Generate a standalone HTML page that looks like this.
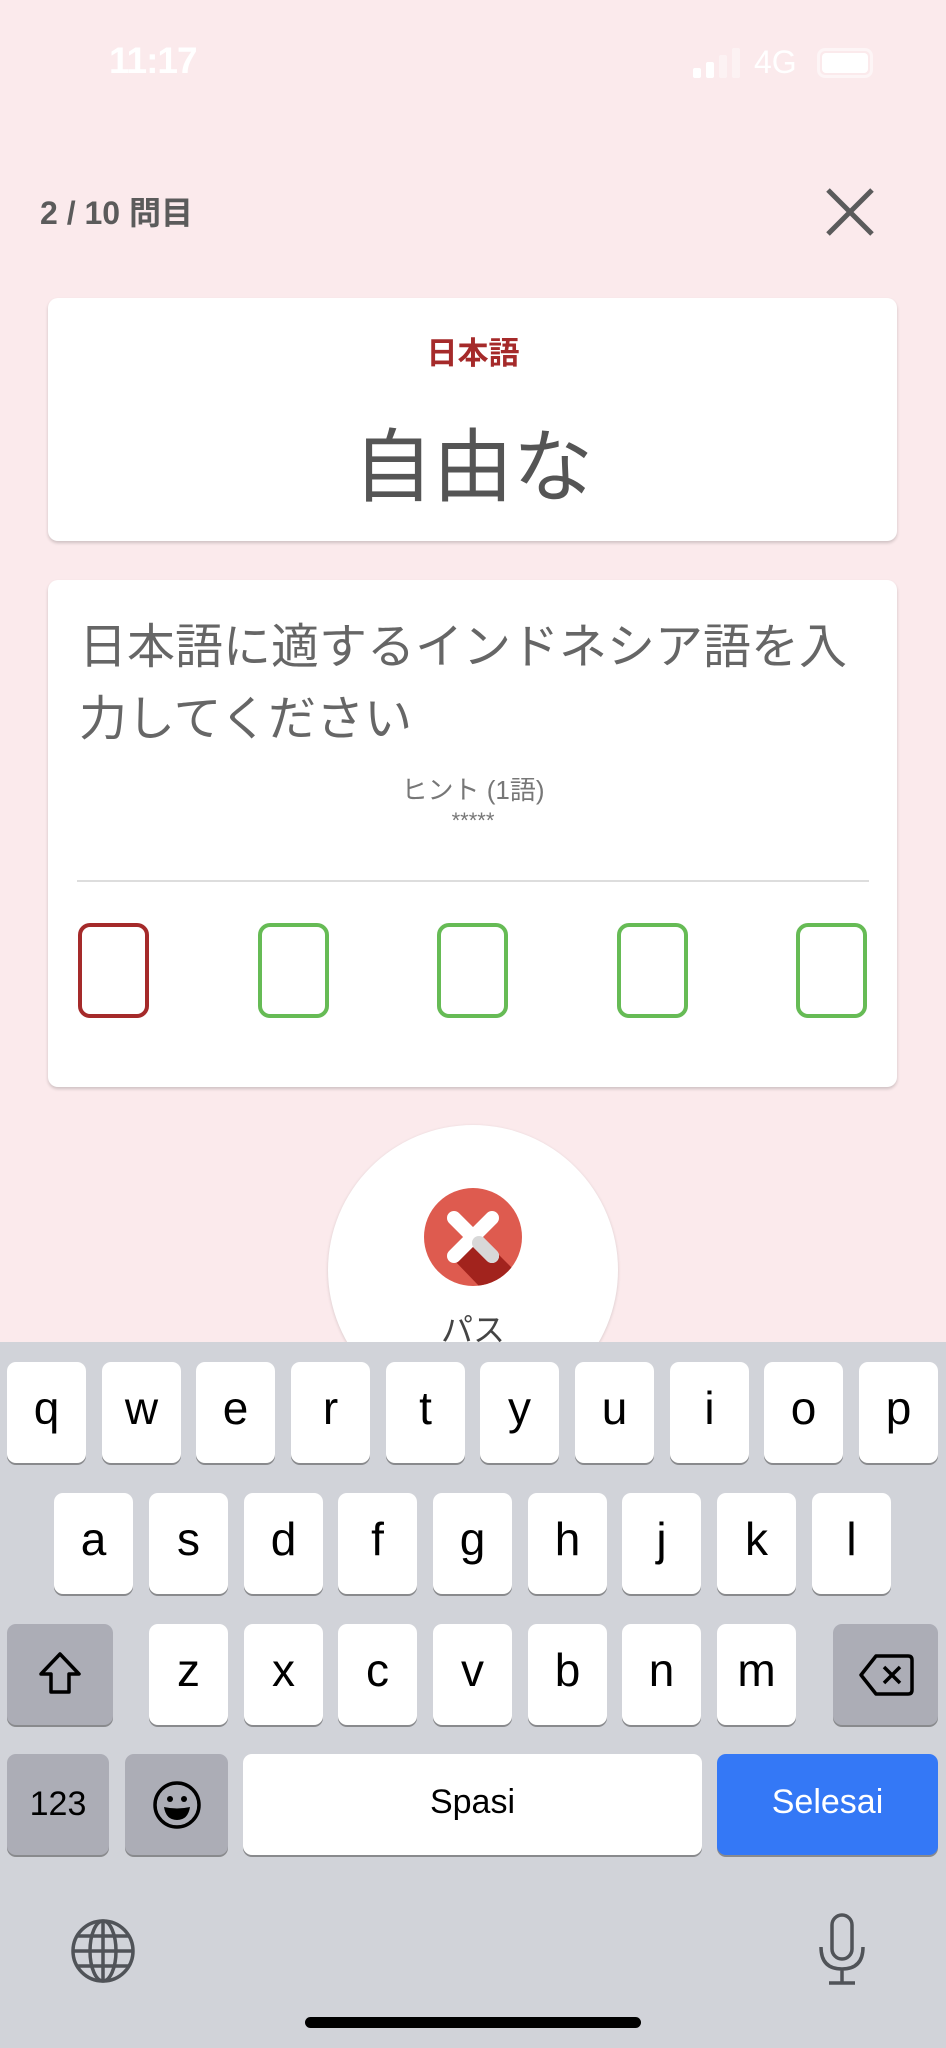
<!DOCTYPE html>
<html><head><meta charset="utf-8"><style>
*{margin:0;padding:0;box-sizing:border-box}
body{width:946px;height:2048px;background:#fbeaec;font-family:"Liberation Sans","Noto Sans CJK JP",sans-serif;position:relative;overflow:hidden}
.abs{position:absolute}
.card{position:absolute;left:48px;width:849px;background:#fff;border-radius:10px;box-shadow:0 2px 3px rgba(0,0,0,.18)}
.box{position:absolute;top:923px;width:71px;height:95px;border:4px solid #66bb55;border-radius:12px}
.kb{position:absolute;left:0;top:1342px;width:946px;height:706px;background:#d1d3d9}
.k{position:absolute;height:101px;background:#fff;border-radius:9px;box-shadow:0 2px 0 #898a8d;font-size:46px;color:#000;text-align:center;line-height:92px}
.g{background:#acadb6}
</style></head><body>
<div class="abs" style="left:109px;top:40px;font-size:37px;font-weight:bold;color:#fff;letter-spacing:-1px">11:17</div>
<div class="abs" style="left:693px;top:68px;width:8px;height:10px;background:#fff;border-radius:2px"></div>
<div class="abs" style="left:706px;top:62px;width:8px;height:16px;background:#fff;border-radius:2px"></div>
<div class="abs" style="left:719px;top:55px;width:8px;height:23px;background:#fff;opacity:.4;border-radius:2px"></div>
<div class="abs" style="left:732px;top:48px;width:8px;height:30px;background:#fff;opacity:.4;border-radius:2px"></div>
<div class="abs" style="left:754px;top:44px;font-size:32px;color:#fff">4G</div>
<div class="abs" style="left:817px;top:48px;width:56px;height:30px;border:3px solid rgba(255,255,255,.5);border-radius:8px"></div>
<div class="abs" style="left:822px;top:53px;width:46px;height:20px;background:#fff;border-radius:4px"></div>
<div class="abs" style="left:40px;top:188px;font-size:32px;font-weight:bold;color:#5b5b5b">2 / 10 問目</div>
<svg class="abs" style="left:822px;top:186px" width="56" height="52"><path d="M6 4L50 48M50 4L6 48" stroke="#5b5b5b" stroke-width="5"/></svg>
<div class="card" style="top:298px;height:243px"></div>
<div class="abs" style="left:0;width:946px;top:328px;text-align:center;font-size:31px;font-weight:bold;color:#a52a2a">日本語</div>
<div class="abs" style="left:0;width:946px;top:403px;text-align:center;font-size:80px;color:#555">自由な</div>
<div class="card" style="top:580px;height:507px"></div>
<div class="abs" style="left:79px;top:612px;width:800px;font-size:48px;line-height:72px;color:#666">日本語に適するインドネシア語を入力してください</div>
<div class="abs" style="left:0;width:946px;top:770px;text-align:center;font-size:26px;color:#777">ヒント (1語)</div>
<div class="abs" style="left:0;width:946px;top:808px;text-align:center;font-size:22px;color:#777">*****</div>
<div class="abs" style="left:77px;top:880px;width:792px;height:2px;background:#ddd"></div>
<div class="box" style="left:78px;border-color:#a52a2a"></div>
<div class="box" style="left:258px"></div>
<div class="box" style="left:437px"></div>
<div class="box" style="left:617px"></div>
<div class="box" style="left:796px"></div>
<div class="abs" style="left:328px;top:1125px;width:290px;height:290px;border-radius:50%;background:#fff;box-shadow:0 1px 3px rgba(0,0,0,.15)"></div>
<svg class="abs" style="left:424px;top:1188px" width="98" height="98" viewBox="0 0 98 98"><defs><clipPath id="c"><circle cx="49" cy="49" r="49"/></clipPath></defs><circle cx="49" cy="49" r="49" fill="#de5b4f"/><path d="M58 50L98 90L98 98L55 98L28 70Z" fill="#a2231d" clip-path="url(#c)"/><path d="M30 30L68 68M68 30L30 68" stroke="#fff" stroke-width="14" stroke-linecap="round"/><path d="M55 55L68 68" stroke="#d8d8d8" stroke-width="14" stroke-linecap="round"/></svg>
<div class="abs" style="left:0;width:946px;top:1305px;text-align:center;font-size:32px;color:#444">パス</div>
<div class="kb"></div>
<div class="k" style="left:7px;top:1362px;width:79px">q</div>
<div class="k" style="left:102px;top:1362px;width:79px">w</div>
<div class="k" style="left:196px;top:1362px;width:79px">e</div>
<div class="k" style="left:291px;top:1362px;width:79px">r</div>
<div class="k" style="left:386px;top:1362px;width:79px">t</div>
<div class="k" style="left:480px;top:1362px;width:79px">y</div>
<div class="k" style="left:575px;top:1362px;width:79px">u</div>
<div class="k" style="left:670px;top:1362px;width:79px">i</div>
<div class="k" style="left:764px;top:1362px;width:79px">o</div>
<div class="k" style="left:859px;top:1362px;width:79px">p</div>
<div class="k" style="left:54px;top:1493px;width:79px">a</div>
<div class="k" style="left:149px;top:1493px;width:79px">s</div>
<div class="k" style="left:244px;top:1493px;width:79px">d</div>
<div class="k" style="left:338px;top:1493px;width:79px">f</div>
<div class="k" style="left:433px;top:1493px;width:79px">g</div>
<div class="k" style="left:528px;top:1493px;width:79px">h</div>
<div class="k" style="left:622px;top:1493px;width:79px">j</div>
<div class="k" style="left:717px;top:1493px;width:79px">k</div>
<div class="k" style="left:812px;top:1493px;width:79px">l</div>
<div class="k g" style="left:7px;top:1624px;width:106px"><svg width="50" height="50" viewBox="0 0 50 50" style="margin-top:25px"><path d="M25 5L44 25H34V43H16V25H6Z" fill="none" stroke="#000" stroke-width="3.5" stroke-linejoin="round"/></svg></div>
<div class="k" style="left:149px;top:1624px;width:79px">z</div>
<div class="k" style="left:244px;top:1624px;width:79px">x</div>
<div class="k" style="left:338px;top:1624px;width:79px">c</div>
<div class="k" style="left:433px;top:1624px;width:79px">v</div>
<div class="k" style="left:528px;top:1624px;width:79px">b</div>
<div class="k" style="left:622px;top:1624px;width:79px">n</div>
<div class="k" style="left:717px;top:1624px;width:79px">m</div>
<div class="k g" style="left:833px;top:1624px;width:105px"><svg width="56" height="46" viewBox="0 0 56 46" style="margin-top:28px"><path d="M18 4H50Q54 4 54 8V38Q54 42 50 42H18L3 23Z" fill="none" stroke="#000" stroke-width="3.5" stroke-linejoin="round"/><path d="M26 15L42 31M42 15L26 31" stroke="#000" stroke-width="3.5"/></svg></div>
<div class="k g" style="left:7px;top:1754px;width:102px;font-size:34px;line-height:100px">123</div>
<div class="k g" style="left:125px;top:1754px;width:103px"><svg width="50" height="50" viewBox="0 0 50 50" style="margin-top:26px"><circle cx="25" cy="25" r="22" fill="none" stroke="#000" stroke-width="3.5"/><circle cx="18" cy="19" r="3"/><circle cx="32" cy="19" r="3"/><path d="M12 27Q25 30 38 27Q36 40 25 40Q14 40 12 27Z"/></svg></div>
<div class="k" style="left:243px;top:1754px;width:459px;font-size:34px;line-height:96px">Spasi</div>
<div class="k" style="left:717px;top:1754px;width:221px;background:#3478f6;color:#fff;font-size:34px;line-height:96px">Selesai</div>
<svg class="abs" style="left:70px;top:1918px" width="66" height="66" viewBox="0 0 66 66" fill="none" stroke="#505358" stroke-width="3.5"><circle cx="33" cy="33" r="30"/><ellipse cx="33" cy="33" rx="13" ry="30"/><path d="M33 3V63M3 33H63M8 18H58M8 48H58"/></svg>
<svg class="abs" style="left:816px;top:1912px" width="52" height="76" viewBox="0 0 52 76" fill="none" stroke="#505358" stroke-width="3.5"><rect x="16" y="3" width="20" height="44" rx="10"/><path d="M5 35Q5 57 26 57Q47 57 47 35M26 57V71M13 71H39"/></svg>
<div class="abs" style="left:305px;top:2017px;width:336px;height:11px;background:#000;border-radius:6px"></div>
</body></html>
